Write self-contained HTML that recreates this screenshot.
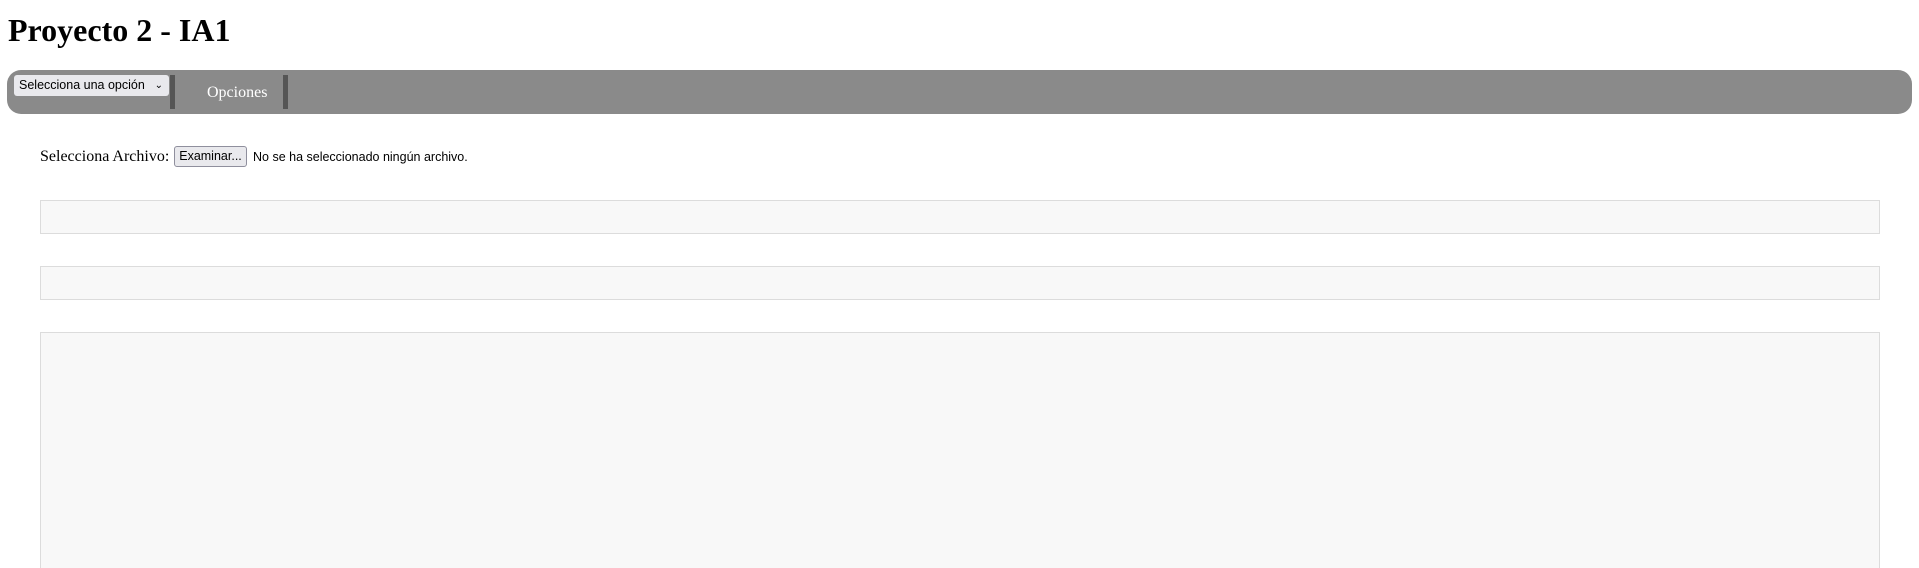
<!DOCTYPE html>
<html style="height:568px;overflow:hidden"><head><meta charset="utf-8"><style>
body{margin:0;background:#fff;font-family:"Liberation Serif",serif;width:1919px;height:568px;overflow:hidden;position:relative}
.a{position:absolute}
h1{position:absolute;left:8px;top:6px;margin:0;font-size:32px;font-weight:bold;line-height:48px}
.nav{left:7px;top:70px;width:1905px;height:44px;background:#8a8a8a;border-radius:14px}
.sel{left:14px;top:75px;width:155px;height:21px;background:#e9e9ed;border-radius:3px;font:12.5px "Liberation Sans",sans-serif;line-height:21px;box-sizing:border-box;padding-left:5px;color:#000}
.bar{top:75px;width:5px;height:34px;background:#555}
.box{left:40px;width:1840px;background:#f8f8f8;border:1px solid #dcdcdc;box-sizing:border-box}
.btn{left:174px;top:146px;width:73px;height:21px;background:#e9e9ed;border:1px solid #8f8f9d;border-radius:3px;box-sizing:border-box;font:12.5px "Liberation Sans",sans-serif;line-height:19px;text-align:center}
</style></head><body>
<h1>Proyecto 2 - IA1</h1>
<div class="a nav"></div>
<div class="a sel">Selecciona una opción<span style="position:absolute;right:6px;top:0;font-size:10px">&#8964;</span></div>
<div class="a bar" style="left:170px"></div>
<div class="a bar" style="left:283px"></div>
<div class="a" style="left:207px;top:83px;color:#fff;font-size:16px;line-height:20px">Opciones</div>
<div class="a" style="left:40px;top:147px;font-size:16px;line-height:20px">Selecciona Archivo:</div>
<div class="a btn">Examinar...</div>
<div class="a" style="left:253px;top:148px;font:12.5px 'Liberation Sans',sans-serif;line-height:18px">No se ha seleccionado ningún archivo.</div>
<div class="a box" style="top:200px;height:34px"></div>
<div class="a box" style="top:266px;height:34px"></div>
<div class="a box" style="top:332px;height:236px;border-bottom:none"></div>
</body></html>
